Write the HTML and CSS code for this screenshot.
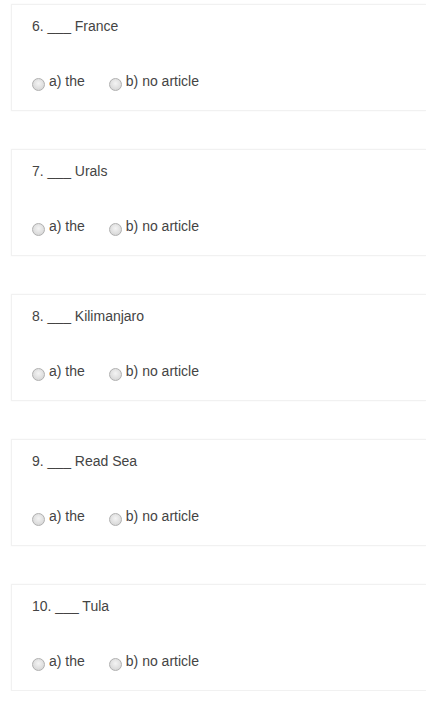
FILE: index.html
```html
<!DOCTYPE html>
<html>
<head>
<meta charset="utf-8">
<link rel="stylesheet" href="styles.css">
</head>
<body>
<div class="list">
  <div class="card">
    <div class="q">6. ___ France</div>
    <div class="opts">
      <label class="opt"><span class="radio"></span>a) the</label>
      <label class="opt"><span class="radio"></span>b) no article</label>
    </div>
  </div>
  <div class="card">
    <div class="q">7. ___ Urals</div>
    <div class="opts">
      <label class="opt"><span class="radio"></span>a) the</label>
      <label class="opt"><span class="radio"></span>b) no article</label>
    </div>
  </div>
  <div class="card">
    <div class="q">8. ___ Kilimanjaro</div>
    <div class="opts">
      <label class="opt"><span class="radio"></span>a) the</label>
      <label class="opt"><span class="radio"></span>b) no article</label>
    </div>
  </div>
  <div class="card">
    <div class="q">9. ___ Read Sea</div>
    <div class="opts">
      <label class="opt"><span class="radio"></span>a) the</label>
      <label class="opt"><span class="radio"></span>b) no article</label>
    </div>
  </div>
  <div class="card">
    <div class="q">10. ___ Tula</div>
    <div class="opts">
      <label class="opt"><span class="radio"></span>a) the</label>
      <label class="opt"><span class="radio"></span>b) no article</label>
    </div>
  </div>
</div>
</body>
</html>
```
FILE: styles.css
```css
html, body {
  margin: 0;
  padding: 0;
  background: #ffffff;
  overflow: hidden;
}
body {
  font-family: "Liberation Sans", Arial, sans-serif;
  font-size: 14px;
  color: #444444;
}
.list {
  display: flex;
  flex-direction: column;
  gap: 38px;
  padding: 4px 0 0 11px;
}
.card {
  height: 107px;
  box-sizing: border-box;
  border: 1px solid #f1f1f1;
  border-right: none;
  box-shadow: 0 0 2px rgba(0,0,0,0.04);
  padding: 11px 0 0 20px;
}
.q {
  line-height: 20px;
  height: 20px;
}
.opts {
  display: flex;
  margin-top: 35px;
}
.opt {
  display: flex;
  align-items: center;
  line-height: 20px;
  height: 20px;
}
.opt + .opt {
  margin-left: 24px;
}
.radio {
  display: inline-block;
  width: 11px;
  height: 11px;
  border-radius: 50%;
  border: 1px solid #b0b0b0;
  background: radial-gradient(circle at 50% 40%, #f4f4f4 0%, #dedede 60%, #d0d0d0 100%);
  margin-right: 4px;
  position: relative;
  top: 3px;
}
```
